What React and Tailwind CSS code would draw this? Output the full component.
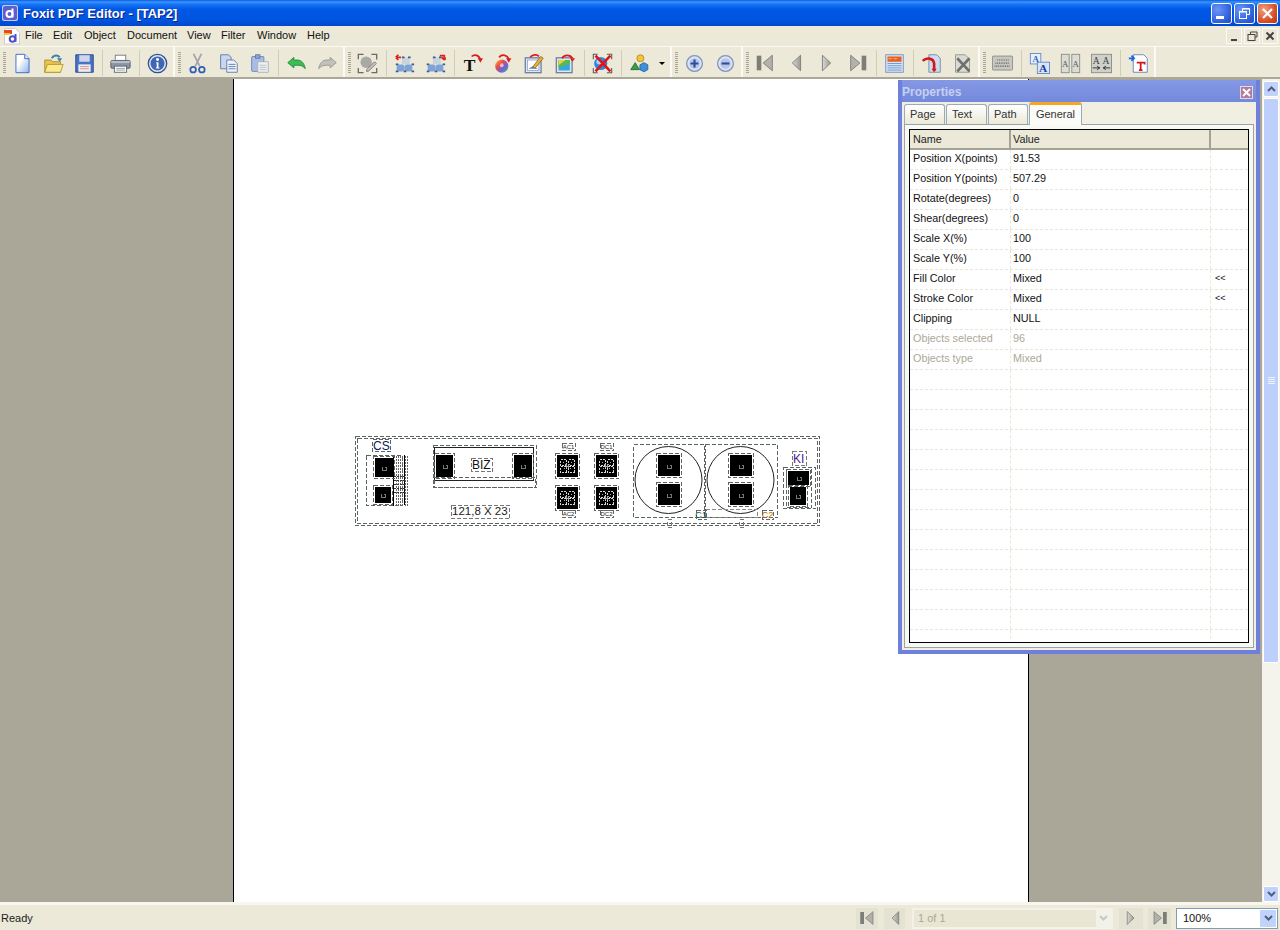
const ui = "font-['Liberation_Sans',Arial,sans-serif]";

function Ico({ children }) {
  return (
    <svg width="21" height="21" viewBox="0 0 24 24" className="block">
      {children}
    </svg>
  );
}

// toolbar icons
const icons = {
  new: (
    <Ico>
      <defs><linearGradient id="gNew" x1="0" y1="0" x2="1" y2="1"><stop offset="0.35" stopColor="#fff" /><stop offset="1" stopColor="#8fb0e8" /></linearGradient></defs>
      <path d="M4.500 1.500h10l5 5v16h-15z" fill="url(#gNew)" stroke="#2f62c8" />
      <path d="M14.500 1.500v5h5" fill="#dbe6f8" stroke="#2f62c8" />
    </Ico>
  ),
  open: (
    <Ico>
      <path d="M2 8h7l2 2h9v12h-18z" fill="#e9c44f" stroke="#a8892c" />
      <path d="M2 22l3-9h18l-3 9z" fill="#fbe98c" stroke="#b3932f" />
      <path d="M10 6c2-4 7-4 9-1" fill="none" stroke="#3f7fa8" strokeWidth="2.200" />
      <path d="M16 6h6l-3 4z" fill="#3f7fa8" />
    </Ico>
  ),
  save: (
    <Ico>
      <path d="M2 2h20v20h-20z" fill="#4a72c4" stroke="#23458f" />
      <rect x="6" y="2.500" width="12" height="7.500" fill="#cdd6ea" />
      <rect x="5" y="13" width="14" height="8.500" fill="#f1eef0" />
      <path d="M7 15.500h10M7 18h10" stroke="#d08a8a" />
    </Ico>
  ),
  print: (
    <Ico>
      <rect x="6" y="2.500" width="12" height="6" fill="#fff" stroke="#6a7482" />
      <rect x="1" y="8.500" width="22" height="9" rx="1.500" fill="#8a95a3" stroke="#4f5966" />
      <rect x="1.500" y="9" width="21" height="2.500" fill="#b8c0ca" />
      <rect x="5" y="15" width="14" height="7" fill="#fff" stroke="#59626e" />
      <path d="M7 17.500h10M7 19.500h10" stroke="#8a95a3" />
    </Ico>
  ),
  info: (
    <Ico>
      <circle cx="12" cy="12" r="10.500" fill="#dfe7f6" stroke="#2f4f8f" strokeWidth="1.500" />
      <circle cx="12" cy="12" r="8" fill="#3f66b0" />
      <circle cx="12" cy="7.500" r="1.700" fill="#fff" />
      <path d="M10.500 10.500h2.600v6h1.200v1.200h-4.200v-1.200h1v-4.800h-.6z" fill="#fff" />
    </Ico>
  ),
  cut: (
    <Ico>
      <path d="M7.500 1l7 14M16.500 1l-7 14" stroke="#a2a5aa" strokeWidth="2" />
      <circle cx="7" cy="19" r="3.200" fill="none" stroke="#2f5fb5" strokeWidth="2" />
      <circle cx="17" cy="19" r="3.200" fill="none" stroke="#2f5fb5" strokeWidth="2" />
    </Ico>
  ),
  copy: (
    <Ico>
      <path d="M3 2h9l3 3v13h-12z" fill="#c9d6ee" stroke="#5a76a8" />
      <path d="M10 8h8l4 4v10h-12z" fill="#eef2fa" stroke="#5a76a8" />
      <path d="M12 13h8M12 15.500h8M12 18h8" stroke="#5a76a8" />
    </Ico>
  ),
  paste: (
    <Ico>
      <rect x="3" y="4" width="14" height="17" rx="1" fill="#a9bde3" stroke="#6a84b5" />
      <rect x="7.500" y="2" width="5" height="4" fill="#8fa6d3" stroke="#5f78aa" />
      <path d="M10 10h12v12h-12z" fill="#eff1f4" stroke="#a8adb5" />
      <path d="M12 14h8M12 16.500h8M12 19h8" stroke="#b5bac2" />
    </Ico>
  ),
  undo: (
    <Ico>
      <path d="M2 11l7-6v3h4c5 0 8 4 9 10-2-3-5-4-9-4h-4v3z" fill="#3dbb55" stroke="#1f8a3a" />
    </Ico>
  ),
  redo: (
    <Ico>
      <path d="M22 11l-7-6v3h-4c-5 0-8 4-9 10 2-3 5-4 9-4h4v3z" fill="#c2c2bc" stroke="#94948e" />
    </Ico>
  ),
  editObj: (
    <Ico>
      <path d="M1.500 7v-5.500h6M16.500 1.500h6v6M22.500 17v5.500h-6M7.500 22.500h-6v-5.500" fill="none" stroke="#6b6b66" strokeWidth="1.500" />
      <circle cx="10.500" cy="10.500" r="6.500" fill="#a8a8a4" />
      <path d="M11 19l9-9 2 2-9 9h-2z" fill="#c5c5c0" stroke="#75756f" />
    </Ico>
  ),
  groupIn: (
    <Ico>
      <rect x="9" y="5" width="9" height="8" fill="#c9d3dc" />
      <rect x="3" y="13" width="9" height="8" rx="3" fill="#7ea3d6" />
      <rect x="12" y="13" width="9" height="8" rx="3" fill="#7ea3d6" />
      <path d="M2 13h3M2 21h3M11 21h3M20 13h3M20 21h3M9 5h3M16 5h3" stroke="#345d9a" strokeWidth="2" />
      <path d="M2 5h6M2 5l3-3M2 5l3 3" stroke="#e0201a" strokeWidth="2" fill="none" />
    </Ico>
  ),
  groupOut: (
    <Ico>
      <rect x="9" y="5" width="9" height="8" fill="#c9d3dc" />
      <rect x="3" y="13" width="9" height="8" rx="3" fill="#7ea3d6" />
      <rect x="12" y="13" width="9" height="8" rx="3" fill="#7ea3d6" />
      <path d="M2 13h3M2 21h3M11 21h3M20 13h3M20 21h3M9 5h3M16 5h3" stroke="#345d9a" strokeWidth="2" />
      <path d="M17 3h5v5M22 8l-3-3M22 8l3-3" stroke="#e0201a" strokeWidth="2" fill="none" />
    </Ico>
  ),
  text: (
    <Ico>
      <text x="2" y="21" fontSize="20" fontFamily="Liberation Serif" fontWeight="700" fill="#111">T</text>
      <path d="M11 4c3-3 9-2 10 4" fill="none" stroke="#d81e1e" strokeWidth="2" />
      <path d="M18 6h6l-3 5z" fill="#d81e1e" />
    </Ico>
  ),
  color: (
    <Ico>
      <defs><linearGradient id="gCol" x1="0" y1="0" x2="1" y2="1"><stop offset="0" stopColor="#f5d63d" /><stop offset="0.35" stopColor="#ee4b44" /><stop offset="0.65" stopColor="#6f5fe0" /><stop offset="1" stopColor="#39c45a" /></linearGradient></defs>
      <circle cx="10" cy="15" r="7.500" fill="url(#gCol)" />
      <circle cx="10" cy="14" r="2.200" fill="#fff" opacity="0.6" />
      <path d="M7 5c3-4 10-3 11 3" fill="none" stroke="#d81e1e" strokeWidth="2" />
      <path d="M15 6h6l-3 5z" fill="#d81e1e" />
    </Ico>
  ),
  image: (
    <Ico>
      <rect x="1.500" y="5.500" width="18" height="17" fill="#dfe6f5" stroke="#6c7fa8" strokeWidth="1.500" />
      <rect x="4" y="8" width="13" height="12" fill="#fff" stroke="#9aa8c4" />
      <path d="M5 18l5-3 6 3z" fill="#5d7bbd" />
      <path d="M10 16L19 4l3 2-9 11z" fill="#e8b23c" stroke="#8e6a1c" />
      <path d="M7 5c2-3 8-4 10-1" fill="none" stroke="#d81e1e" strokeWidth="2" />
    </Ico>
  ),
  picture: (
    <Ico>
      <rect x="1.500" y="5.500" width="18" height="17" fill="#e6e6e6" stroke="#6c7fa8" strokeWidth="1.500" />
      <rect x="4" y="8" width="13" height="12" fill="#35a7e0" />
      <path d="M4 8h13v4l-13 5z" fill="#58b94f" />
      <path d="M4 8h8l-8 6z" fill="#e9cf45" />
      <path d="M8 6c2-4 9-5 12 0" fill="none" stroke="#d81e1e" strokeWidth="2" />
      <path d="M17 6h6l-3 4z" fill="#d81e1e" />
    </Ico>
  ),
  remove: (
    <Ico>
      <path d="M1.500 7v-5.500h5M17 1.500h5.500v5.500M22.500 17v5.500h-5.500M6.500 22.500h-5v-5.500" fill="none" stroke="#55585f" strokeWidth="1.200" />
      <circle cx="10" cy="12" r="7.500" fill="#2f86dc" />
      <circle cx="8" cy="10" r="3" fill="#a9d5f8" />
      <path d="M4 3l17 18M21 3L4 21" stroke="#e31414" strokeWidth="3" />
    </Ico>
  ),
  shapes: (
    <Ico>
      <circle cx="13" cy="6" r="4" fill="#f2c53c" stroke="#b48c1c" />
      <path d="M7 11l5 8h-10z" fill="#3c9a4a" stroke="#22702f" />
      <path d="M17 11l4.500 2.500v5.500l-4.500 2.500-4.500-2.500v-5.500z" fill="#3f8fd8" stroke="#2565a8" />
    </Ico>
  ),
  zoomIn: (
    <Ico>
      <circle cx="12" cy="12" r="9" fill="#dce4f5" stroke="#8294bd" strokeWidth="1.500" />
      <circle cx="12" cy="12" r="6" fill="#b5c6e8" />
      <path d="M7.500 12h9M12 7.500v9" stroke="#2c4c9a" strokeWidth="2.400" />
    </Ico>
  ),
  zoomOut: (
    <Ico>
      <circle cx="12" cy="12" r="9" fill="#dce4f5" stroke="#8294bd" strokeWidth="1.500" />
      <circle cx="12" cy="12" r="6" fill="#b5c6e8" />
      <path d="M7.500 12h9" stroke="#2c4c9a" strokeWidth="2.400" />
    </Ico>
  ),
  first: <NavGlyph kind="first" size={22} />,
  prev: <NavGlyph kind="prev" size={22} />,
  next: <NavGlyph kind="next" size={22} />,
  last: <NavGlyph kind="last" size={22} />,
  form: (
    <Ico>
      <rect x="2" y="2" width="20" height="20" fill="#d8e4f5" stroke="#6f8fb8" />
      <rect x="4" y="4" width="16" height="6" fill="#e85f25" />
      <path d="M5 6.500h4M11 6.500h4" stroke="#f2c86a" />
      <path d="M4 12h16M4 14.500h16M4 17h16M4 19.500h16" stroke="#5f95cf" />
    </Ico>
  ),
  attach: (
    <Ico>
      <path d="M9 2h9l4 4v16h-13z" fill="#cfdcf0" stroke="#6f86a8" />
      <path d="M2 9c4-4 12-4 13 3v8" fill="none" stroke="#d31616" strokeWidth="3" />
      <path d="M12 18l3 4 3-4z" fill="#d31616" />
    </Ico>
  ),
  delPage: (
    <Ico>
      <path d="M4 2h11l5 5v15h-16z" fill="#dadad5" stroke="#95958f" />
      <path d="M6 6l14 15M20 6l-14 15" stroke="#70706a" strokeWidth="3" />
    </Ico>
  ),
  keyboard: (
    <Ico>
      <rect x="0.500" y="3.500" width="23" height="16" rx="1" fill="#c8c8c2" stroke="#8a8a84" />
      <path d="M6 8h14M4 11.500h16M3 15h18" stroke="#55554f" strokeDasharray="1 1" strokeWidth="1.400" />
    </Ico>
  ),
  fontSize: (
    <Ico>
      <rect x="1.500" y="0.500" width="12" height="12" fill="#e8eefa" stroke="#5f86c5" />
      <rect x="9.500" y="10.500" width="14" height="13" fill="#d8e4f8" stroke="#5f86c5" />
      <text x="4" y="10" fontSize="10" fontWeight="700" fontFamily="Liberation Serif" fill="#2f62c8">A</text>
      <text x="11.500" y="22" fontSize="13" fontWeight="700" fontFamily="Liberation Serif" fill="#1b3f96">A</text>
    </Ico>
  ),
  charSpace: (
    <Ico>
      <rect x="1.500" y="1.500" width="9" height="21" fill="#dcdcd6" stroke="#8a8a84" />
      <rect x="13.500" y="1.500" width="9" height="21" fill="#dcdcd6" stroke="#8a8a84" />
      <text x="2.300" y="16" fontSize="10" fontFamily="Liberation Serif" fill="#55554f">A</text>
      <text x="14.300" y="16" fontSize="10" fontFamily="Liberation Serif" fill="#55554f">A</text>
    </Ico>
  ),
  wordSpace: (
    <Ico>
      <rect x="0.500" y="1.500" width="23" height="21" fill="#d0d0ca" stroke="#8a8a84" />
      <text x="2" y="12" fontSize="11" fontFamily="Liberation Serif" fill="#44443f">A</text>
      <text x="13" y="12" fontSize="11" fontFamily="Liberation Serif" fill="#44443f">A</text>
      <path d="M2 17h8M7 15l3 2-3 2M22 17h-8M17 15l-3 2 3 2" stroke="#222" fill="none" />
    </Ico>
  ),
  addText: (
    <Ico>
      <path d="M6 2h12l4 4v16h-16z" fill="#fff" stroke="#5f7fb8" />
      <path d="M1 6h6M4 3l3 3-3 3" stroke="#1a66e0" strokeWidth="2" fill="none" />
      <path d="M10 11h9v2M14.500 11v8M12.500 19.500h4" stroke="#d01818" strokeWidth="2" fill="none" />
    </Ico>
  ),
};

function NavGlyph({ kind, size = 24 }) {
  const tri = "#b2b2ac";
  const edge = "#7e7e78";
  return (
    <svg width={size} height={size} viewBox="0 0 24 24" className="block">
      <defs>
        <linearGradient id={"g" + kind} x1="0" y1="0" x2="1" y2="0"><stop offset="0" stopColor="#d9d9d3" /><stop offset="1" stopColor="#9a9a94" /></linearGradient>
      </defs>
      {kind === "first" && (
        <>
          <rect x="3" y="4" width="5" height="16" fill={edge} />
          <path d="M20 3.500v17l-10-8.500z" fill={tri} stroke={edge} />
        </>
      )}
      {kind === "prev" && <path d="M17 3.500v17l-9-8.500z" fill={"url(#g" + kind + ")"} stroke={edge} />}
      {kind === "next" && <path d="M7 3.500v17l9-8.500z" fill={"url(#g" + kind + ")"} stroke={edge} />}
      {kind === "last" && (
        <>
          <path d="M4 3.500v17l10-8.500z" fill={tri} stroke={edge} />
          <rect x="16" y="4" width="5" height="16" fill={edge} />
        </>
      )}
    </svg>
  );
}

// "|" is a thin separator inside a group, "drop" the small arrow after an icon
const toolbarGroups = [
  { w: "w-[175px]", items: ["new", "open", "save", "|", "print", "|", "info"] },
  { w: "w-[170px]", items: ["cut", "copy", "paste", "|", "undo", "redo"] },
  { w: "w-[327px]", items: ["editObj", "|", "groupIn", "groupOut", "|", "text", "color", "image", "picture", "|", "remove", "|", "shapes", "drop"] },
  { w: "w-[71px]", items: ["zoomIn", "zoomOut"] },
  { w: "w-[237px]", items: ["first", "prev", "next", "last", "|", "form", "|", "attach", "delPage"] },
  { w: "w-[176px]", items: ["keyboard", "|", "fontSize", "charSpace", "wordSpace", "|", "addText"] },
];

function Grip() {
  return <div className="w-[3px] h-[22px] ml-[3px] mr-[1px] bg-[repeating-linear-gradient(to_bottom,#a8a596_0,#a8a596_1px,transparent_1px,transparent_2px)]" />;
}

function Toolbar() {
  return (
    <div className="h-[32px] flex bg-[#ece9d8] border-b-2 border-[#aca899]">
      {toolbarGroups.map((g, i) => (
        <div key={i} className={`${g.w} h-[30px] pt-[2px] flex items-center border-r-2 border-[#fbfaf5]`}>
          <Grip />
          {g.items.map((name, j) => {
            if (name === "|") return <div key={j} className="w-[6px] flex justify-center"><div className="w-px h-[26px] bg-[#cfccba]" /></div>;
            if (name === "drop")
              return (
                <div key={j} className="w-[14px] flex justify-center">
                  <div className="border-x-[3px] border-t-[3px] border-x-transparent border-t-black" />
                </div>
              );
            return <div key={j} className="w-[31px] flex justify-center">{icons[name]}</div>;
          })}
        </div>
      ))}
    </div>
  );
}

function TitleButton({ red, children }) {
  return (
    <div className={`w-[21px] h-[21px] rounded-[3px] border border-white flex items-center justify-center ${red ? "bg-[radial-gradient(circle_at_30%_30%,#f0a080,#d9512a_60%,#b83212)]" : "bg-[radial-gradient(circle_at_30%_30%,#6b96f5,#2f62dc_65%,#1f49c4)]"}`}>
      {children}
    </div>
  );
}

function TitleBar() {
  return (
    <div className="h-[26px] flex items-center justify-between pl-[2px] pr-[2px] bg-[linear-gradient(to_bottom,#0a5fe0_0,#3a93ff_2px,#1a78f5_4px,#0058e6_9px,#0055e0_20px,#0048c8_26px)]">
      <div className="flex items-center gap-[5px]">
        <div className="w-4 h-4 rounded-[2px] bg-[#c8c8f0] flex items-center justify-center">
          <svg width="14" height="14" viewBox="0 0 14 14">
            <rect width="14" height="14" rx="2" fill="#5d5fd0" />
            <circle cx="6.500" cy="8" r="3" fill="none" stroke="#fff" strokeWidth="2" />
            <path d="M9.500 2.500v9" stroke="#fff" strokeWidth="2" />
          </svg>
        </div>
        <span className="mt-px text-[13px] font-bold text-white [text-shadow:1px_1px_#0f1f89]">Foxit PDF Editor - [TAP2]</span>
      </div>
      <div className="flex gap-[2px]">
        <TitleButton><div className="w-[8px] h-[3px] bg-white mt-[9px] -ml-[3px]" /></TitleButton>
        <TitleButton>
          <svg width="13" height="13" viewBox="0 0 13 13" fill="none" stroke="#fff"><path d="M4.500 4v-2.500h7v6h-2.500" /><rect x="1.500" y="4.500" width="7" height="7" /><path d="M1.500 5h7M4.500 2h7" /></svg>
        </TitleButton>
        <TitleButton red>
          <svg width="13" height="13" viewBox="0 0 13 13" stroke="#fff" strokeWidth="2.200"><path d="M2 2l9 9M11 2l-9 9" /></svg>
        </TitleButton>
      </div>
    </div>
  );
}

const menus = [
  ["File", "w-[28px]"],
  ["Edit", "w-[31px]"],
  ["Object", "w-[43px]"],
  ["Document", "w-[60px]"],
  ["View", "w-[34px]"],
  ["Filter", "w-[36px]"],
  ["Window", "w-[50px]"],
  ["Help", "w-[30px]"],
];

function MenuBar() {
  return (
    <div className="h-[21px] flex items-center bg-[#ece9d8] border-b border-[#fbfaf5] text-[11px] text-[#111]">
      <div className="w-[25px] pl-[3px]">
        <svg width="18" height="18" viewBox="0 0 18 18">
          <path d="M1.500 1.500h11l4 4v11.500h-15z" fill="#fff" stroke="#cfcfcf" />
          <rect x="1" y="3" width="8" height="4" fill="#e8452a" />
          <rect x="1" y="6" width="6" height="2" fill="#f0c83a" />
          <circle cx="9.500" cy="12" r="2.800" fill="none" stroke="#4f55c8" strokeWidth="2" />
          <path d="M12.500 7v8" stroke="#4f55c8" strokeWidth="2" />
        </svg>
      </div>
      {menus.map(([label, w]) => (
        <span key={label} className={`${w} -mt-[2px]`}>{label}</span>
      ))}
      <div className="ml-auto pr-[2px] flex gap-[2px]">
        <div className="w-[16px] h-[16px] border border-[#fbfaf5] flex items-end justify-center pb-[2px]"><div className="w-[6px] h-[2px] bg-[#444]" /></div>
        <div className="w-[16px] h-[16px] border border-[#fbfaf5] flex items-center justify-center">
          <svg width="11" height="11" viewBox="0 0 11 11" fill="none" stroke="#444"><path d="M3.500 3v-2h6.500v5h-2" /><rect x="1" y="3.500" width="7" height="6" /></svg>
        </div>
        <div className="w-[16px] h-[16px] border border-[#fbfaf5] flex items-center justify-center">
          <svg width="10" height="10" viewBox="0 0 10 10" stroke="#444" strokeWidth="2"><path d="M1.500 1.500l7 7M8.500 1.500l-7 7" /></svg>
        </div>
      </div>
    </div>
  );
}

const Box = ({ x, y, w, h, c = "#5c6460" }) => (
  <rect x={x + 0.5} y={y + 0.5} width={w} height={h} fill="none" stroke={c} strokeDasharray="4 2" />
);

// black pad with its small hook mark and a dashed selection box round it
const Pad = ({ x, y, w, h }) => {
  const cx = Math.round(x + w / 2) + 0.5;
  const cy = Math.round(y + h / 2) + 0.5;
  return (
    <g>
      <rect x={x} y={y} width={w} height={h} fill="#000" />
      <path d={`M${cx - 2} ${cy - 2}v4h4v-3h-2`} stroke="#777" fill="none" />
      <Box x={x - 2} y={y - 2} w={w + 3} h={h + 3} />
    </g>
  );
};

const Qr = ({ x, y }) => (
  <g>
    <rect x={x} y={y} width="21" height="22" fill="#000" />
    <rect x={x + 3.500} y={y + 4.500} width="6" height="6" fill="none" stroke="#d8d8d8" strokeDasharray="2 1" />
    <rect x={x + 11.500} y={y + 4.500} width="6" height="6" fill="none" stroke="#d8d8d8" strokeDasharray="2 1" />
    <rect x={x + 3.500} y={y + 11.500} width="6" height="6" fill="none" stroke="#d8d8d8" strokeDasharray="2 1" />
    <rect x={x + 11.500} y={y + 11.500} width="6" height="6" fill="none" stroke="#d8d8d8" strokeDasharray="2 1" />
    <path d={`M${x + 6} ${y + 7}l9 8M${x + 15} ${y + 7}l-9 8`} stroke="#aaa" strokeDasharray="2 1" />
    <Box x={x - 2} y={y - 2} w={24} h={25} />
  </g>
);

const Label = ({ x, y, w, h, children, fill = "#222", size = 6 }) => (
  <g>
    <Box x={x} y={y} w={w} h={h} c="#666" />
    <text x={x + w / 2} y={y + h - 1} textAnchor="middle" fontSize={size} fontFamily="Liberation Sans" fill={fill}>{children}</text>
  </g>
);

function Drawing() {
  return (
    <svg width="480" height="105" viewBox="0 0 480 105" className="block" shapeRendering="crispEdges">
      <Box x={5} y={6} w={464} h={89} />
      <Box x={7} y={8} w={460} h={85} />

      {/* CS block */}
      <text x="23" y="20" fontSize="12" fontFamily="Liberation Sans" fill="#0a1a60">CS</text>
      <Box x={22} y={9} w={18} h={12} />
      <Box x={16} y={25} w={36} h={50} />
      <path d="M43.500 27v49M54.500 25v50" stroke="#000" />
      <Pad x={25} y={28} w={18} h={19} />
      <Pad x={25} y={57} w={16} h={16} />
      <path d="M46 26v50M48 26v50M50 26v50M52 26v50M55 26v50M57 26v50" stroke="#666" strokeDasharray="2 1" />
      <path d="M44 46h12M44 50h12M44 54h12M44 58h12M44 62h12" stroke="#333" strokeDasharray="2 1" />

      {/* BIZ block */}
      <Box x={83} y={15} w={103} h={42} />
      <rect x="84.500" y="17.500" width="99" height="33" fill="none" stroke="#222" />
      <Box x={84} y={47} w={101} h={10} />
      <Pad x={86} y={25} w={17} h={22} />
      <Pad x={164} y={25} w={18} h={22} />
      <Box x={121} y={28} w={21} h={13} c="#777" />
      <text x="122" y="39" fontSize="12" fontFamily="Liberation Sans" fill="#111">BIZ</text>

      <Box x={101} y={75} w={58} h={13} c="#777" />
      <text x="102" y="85" fontSize="11.500" fontFamily="Liberation Sans" fill="#222">121,8 X 23</text>

      {/* QR pads */}
      <Label x={212} y={13} w={13} h={7}>AC1</Label>
      <Label x={212} y={80} w={13} h={7}>AC2</Label>
      <Label x={250} y={13} w={13} h={7}>DC1</Label>
      <Label x={250} y={80} w={13} h={7}>DC2</Label>
      <Qr x={207} y={25} />
      <Qr x={207} y={57} />
      <Qr x={246} y={25} />
      <Qr x={246} y={57} />

      {/* capacitors */}
      <g shapeRendering="geometricPrecision">
        <circle cx="318.500" cy="50" r="33.500" fill="none" stroke="#222" />
        <circle cx="390.500" cy="50" r="33.500" fill="none" stroke="#222" />
      </g>
      <Box x={283} y={14} w={71} h={73} />
      <Box x={355} y={14} w={72} h={73} />
      <Box x={355} y={79} w={52} h={8} c="#888" />
      <Pad x={308} y={25} w={22} h={21} />
      <Pad x={308} y={54} w={22} h={21} />
      <Pad x={380} y={25} w={22} h={21} />
      <Pad x={380} y={54} w={22} h={21} />
      <Label x={346} y={80} w={10} h={9} fill="#155" size={9}>C1</Label>
      <Label x={412} y={80} w={11} h={9} fill="#a60" size={9}>C2</Label>
      <Box x={317} y={89} w={4} h={8} c="#777" />
      <Box x={389} y={89} w={4} h={8} c="#777" />

      {/* KI block */}
      <text x="443" y="33" fontSize="12" fontFamily="Liberation Sans" fill="#4a1a90">KI</text>
      <Box x={442} y={21} w={14} h={14} c="#777" />
      <Box x={433} y={37} w={32} h={41} />
      <Box x={436} y={39} w={25} h={38} />
      <Pad x={438} y={41} w={21} h={14} />
      <Pad x={440} y={57} w={16} h={18} />
    </svg>
  );
}

const rows = [
  ["Position X(points)", "91.53", ""],
  ["Position Y(points)", "507.29", ""],
  ["Rotate(degrees)", "0", ""],
  ["Shear(degrees)", "0", ""],
  ["Scale X(%)", "100", ""],
  ["Scale Y(%)", "100", ""],
  ["Fill Color", "Mixed", "<<"],
  ["Stroke Color", "Mixed", "<<"],
  ["Clipping", "NULL", ""],
  ["Objects selected", "96", "", true],
  ["Objects type", "Mixed", "", true],
  ...Array.from({ length: 13 }, () => ["", "", ""]),
];

const tabs = [
  ["Page", "w-[41px]"],
  ["Text", "w-[41px]"],
  ["Path", "w-[40px]"],
];

function Properties() {
  return (
    <div className="absolute left-[898px] top-[80px] w-[362px] h-[574px] bg-[#6f7fdc] p-[4px] pt-0 flex flex-col">
      <div className="h-[22px] shrink-0 flex items-center justify-between pt-[2px] pr-[3px] bg-[linear-gradient(to_bottom,#8598e4,#7389dc)]">
        <span className="text-[12px] font-bold text-[#c5d0f3]">Properties</span>
        <div className="w-[13px] h-[13px] bg-[#b27a9c] border border-[#e6d8e6] flex items-center justify-center">
          <svg width="9" height="9" viewBox="0 0 9 9" stroke="#fff" strokeWidth="2"><path d="M1 1l7 7M8 1l-7 7" /></svg>
        </div>
      </div>
      <div className="flex-1 min-h-0 bg-[#f1efe2] flex flex-col pl-[2px]">
        <div className="h-[22px] shrink-0 flex items-end text-[11px] text-[#333]">
          {tabs.map(([t, w]) => (
            <div key={t} className={`${w} h-[20px] mr-px flex items-center pl-[5px] rounded-t-[3px] border border-b-0 border-[#9aaab8] bg-[linear-gradient(to_bottom,#fff,#ece9d8)]`}>{t}</div>
          ))}
          <div className="w-[53px] h-[23px] -mb-px z-10 flex items-start pt-px justify-center rounded-t-[3px] border-x border-[#9aaab8] border-t-[3px] border-t-[#f5a623] bg-[#fbfbf8]">General</div>
        </div>
        <div className="h-[524px] shrink-0 mr-[2px] border border-[#9aa3a8] bg-[#f8f8f4] p-[4px]">
          <div className="h-[514px] border border-black bg-white overflow-hidden text-[10.800px]">
            <div className="h-[20px] grid grid-cols-[101px_200px_1fr] bg-[#ece9d8] text-[#222]">
              <div className="pl-[3px] leading-[18px] border-r-2 border-b-2 border-[#a5a295]">Name</div>
              <div className="pl-[2px] leading-[18px] border-r-2 border-b-2 border-[#a5a295]">Value</div>
              <div className="border-b-2 border-[#a5a295]" />
            </div>
            {rows.map(([name, value, extra, muted], i) => (
              <div key={i} className={`h-[20px] grid grid-cols-[101px_200px_1fr] leading-[17px] border-b border-dashed border-[#e9e7da] ${muted ? "text-[#aca899]" : "text-[#111]"}`}>
                <div className="pl-[3px] border-r border-dashed border-[#e9e7da] whitespace-nowrap">{name}</div>
                <div className="pl-[2px] border-r border-dashed border-[#e9e7da]">{value}</div>
                <div className="pl-[4px] text-[9px]">{extra}</div>
              </div>
            ))}
            <div className="h-[20px] grid grid-cols-[101px_200px_1fr]">
              <div className="border-r border-dashed border-[#e9e7da]" />
              <div className="border-r border-dashed border-[#e9e7da]" />
            </div>
          </div>
        </div>
      </div>
    </div>
  );
}

function ScrollArrow({ up }) {
  return (
    <div className="h-[16px] shrink-0 rounded-[2px] border border-white bg-[#c1d3fb] flex items-center justify-center">
      <svg width="9" height="6" viewBox="0 0 9 6" fill="none" stroke="#4d6185" strokeWidth="2">
        <path d={up ? "M1 5l3.500-3.500 3.500 3.500" : "M1 1l3.500 3.500 3.500-3.500"} />
      </svg>
    </div>
  );
}

function Scrollbar() {
  return (
    <div className="w-[18px] shrink-0 flex flex-col bg-[#f5f4ec] px-px pt-[2px]">
      <ScrollArrow up />
      <div className="h-[565px] mt-px rounded-[2px] border border-white bg-[#bcd0fb] flex flex-col items-center justify-center gap-px">
        <div className="w-[7px] h-px bg-[#eef3fe]" />
        <div className="w-[7px] h-px bg-[#eef3fe]" />
        <div className="w-[7px] h-px bg-[#eef3fe]" />
        <div className="w-[7px] h-px bg-[#eef3fe]" />
      </div>
      <div className="flex-1" />
      <ScrollArrow />
    </div>
  );
}

function NavBtn({ kind, className }) {
  return (
    <div className={`h-[21px] bg-[#e4e2d2] flex items-center justify-center ${className}`}>
      <NavGlyph kind={kind} size={18} />
    </div>
  );
}

function StatusBar() {
  return (
    <div className="h-[28px] flex items-center pt-px bg-[#ece9d8] border-t-[3px] border-[#f8f7ef] text-[11px]">
      <span className="pl-px text-[#222] flex-1">Ready</span>
      <div className="flex items-center pr-[2px]">
        <NavBtn kind="first" className="w-[22px]" />
        <NavBtn kind="prev" className="w-[21px] ml-[6px]" />
        <div className="w-[201px] h-[21px] ml-[7px] border-2 border-[#f3f1e8] bg-[#e9e6d4] flex items-center justify-between text-[#aca899]">
          <span className="pl-[4px]">1 of 1</span>
          <div className="w-[15px] h-[17px] bg-[#f3f2ea] flex items-center justify-center">
            <svg width="9" height="6" viewBox="0 0 9 6" fill="none" stroke="#c9c8bc" strokeWidth="2"><path d="M1 1l3.500 3.500 3.500-3.500" /></svg>
          </div>
        </div>
        <NavBtn kind="next" className="w-[24px] ml-[6px]" />
        <NavBtn kind="last" className="w-[23px] ml-[5px]" />
        <div className="w-[102px] h-[21px] ml-[5px] border border-[#7f9db9] bg-white flex items-center justify-between pl-[6px] pr-px text-[#111]">
          <span>100%</span>
          <div className="w-[16px] h-[17px] rounded-[1px] bg-[#c1d3fb] flex items-center justify-center">
            <svg width="9" height="6" viewBox="0 0 9 6" fill="none" stroke="#4d6185" strokeWidth="2"><path d="M1 1l3.500 3.500 3.500-3.500" /></svg>
          </div>
        </div>
      </div>
    </div>
  );
}

export default function App() {
  return (
    <div className={`${ui} relative w-[1280px] h-[930px] flex flex-col overflow-hidden bg-[#ece9d8]`}>
      <TitleBar />
      <MenuBar />
      <Toolbar />

      <div className="h-[823px] flex">
        <div className="flex-1 flex bg-[#aaa698] pl-[1px]">
          <div className="w-[232px]" />
          <div className="w-[796px] border-x border-black bg-white pl-[116px] pt-[351px]">
            <Drawing />
          </div>
        </div>
        <Scrollbar />
      </div>

      <StatusBar />
      <Properties />
    </div>
  );
}
